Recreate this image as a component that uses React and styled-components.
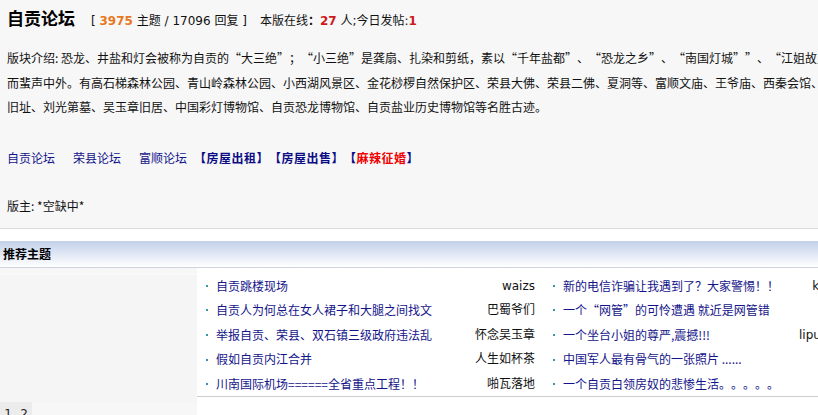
import React from 'react';
import styled, { createGlobalStyle } from 'styled-components';

const GlobalStyle = createGlobalStyle`
    html, body {
        margin: 0;
        padding: 0;
        overflow: hidden;
        background: #f7f7f7;
    }
    body {
        font-family: "Noto Sans CJK SC", sans-serif;
        font-size: 12px;
        color: #000;
        text-spacing-trim: space-all;
    }
`;

const topics = [
    [
        { title: '自贡跳楼现场', author: 'waizs' },
        { title: '新的电信诈骗让我遇到了？大家警惕！！', author: 'kingkong08' },
    ],
    [
        { title: '自贡人为何总在女人裙子和大腿之间找文', author: '巴蜀爷们' },
        { title: '一个“网管”的可怜遭遇 就近是网管错', author: 'ztq' },
    ],
    [
        { title: '举报自贡、荣县、双石镇三级政府违法乱', author: '怀念吴玉章' },
        { title: '一个坐台小姐的尊严,震撼!!!', author: 'lipu20080808' },
    ],
    [
        { title: '假如自贡内江合并', author: '人生如杯茶' },
        { title: '中国军人最有骨气的一张照片 ......', author: 'yy' },
    ],
    [
        { title: '川南国际机场======全省重点工程！！', author: '啪瓦落地' },
        { title: '一个自贡白领房奴的悲惨生活。。。。。', author: 'abc' },
    ],
];

const App = () => {
    return (
        <>
            <GlobalStyle />
            <StyledPage>
                <StyledTop>
                    <StyledTitleRow>
                        <StyledForumName>自贡论坛</StyledForumName>
                        <StyledStats>
                            [ <StyledOrange>3975</StyledOrange> 主题 / 17096 回复 ]
                        </StyledStats>
                        <StyledStats $gap>
                            本版在线<b>：</b><StyledRed>27</StyledRed> 人;今日发帖:<StyledRed>1</StyledRed>
                        </StyledStats>
                    </StyledTitleRow>
                    <StyledIntro>
                        <StyledIntroLine>
                            <StyledLabel>版块介绍: </StyledLabel>恐龙、井盐和灯会被称为自贡的“大三绝”；“小三绝”是龚扇、扎染和剪纸，素以“千年盐都”、“恐龙之乡”、“南国灯城””、“江姐故里”而闻名，
                        </StyledIntroLine>
                        <StyledIntroLine>而蜚声中外。有高石梯森林公园、青山岭森林公园、小西湖风景区、金花桫椤自然保护区、荣县大佛、荣县二佛、夏洞等、富顺文庙、王爷庙、西秦会馆、王爷庙、</StyledIntroLine>
                        <StyledIntroLine>旧址、刘光第墓、吴玉章旧居、中国彩灯博物馆、自贡恐龙博物馆、自贡盐业历史博物馆等名胜古迹。</StyledIntroLine>
                    </StyledIntro>
                    <StyledLinkRow>
                        <StyledForumLink>自贡论坛</StyledForumLink>
                        <StyledForumLink>荣县论坛</StyledForumLink>
                        <StyledForumLink>富顺论坛</StyledForumLink>
                        <StyledBoldLink>【房屋出租】</StyledBoldLink>
                        <StyledBoldLink>【房屋出售】</StyledBoldLink>
                        <StyledBoldLink $red>【<span>麻辣征婚</span>】</StyledBoldLink>
                    </StyledLinkRow>
                    <StyledModerator>版主: *空缺中*</StyledModerator>
                </StyledTop>

                <StyledSection>
                    <StyledSectionHead>推荐主题</StyledSectionHead>
                    <StyledSectionBody>
                        <StyledFocusCell>
                            <StyledFocusBox />
                            <StyledPager>
                                <StyledPageBtn>1</StyledPageBtn>
                                <StyledPageBtn>2</StyledPageBtn>
                            </StyledPager>
                        </StyledFocusCell>
                        <StyledListCell>
                            <StyledList>
                                {topics.map((row, i) => (
                                    <StyledRow key={i}>
                                        {row.map((t, j) => (
                                            <StyledTopic key={j}>
                                                <StyledBullet />
                                                <StyledTopicTitle>{t.title}</StyledTopicTitle>
                                                <StyledAuthor>{t.author}</StyledAuthor>
                                            </StyledTopic>
                                        ))}
                                    </StyledRow>
                                ))}
                            </StyledList>
                        </StyledListCell>
                    </StyledSectionBody>
                </StyledSection>
            </StyledPage>
        </>
    );
};

export default App;

const StyledPage = styled.div`
    width: 900px;
`;
const StyledTop = styled.div`
    padding: 0 7px 10px;
`;
const StyledTitleRow = styled.div`
    display: flex;
    align-items: baseline;
    height: 36px;
    line-height: 36px;
    white-space: nowrap;
`;
const StyledForumName = styled.h1`
    margin: 0 16px 0 0;
    font-size: 17px;
    font-weight: 700;
    color: #000;
`;
const StyledStats = styled.span`
    font-family: "DejaVu Sans", "Noto Sans CJK SC", sans-serif;
    font-size: 12px;
    color: #111;
    margin-left: ${p => (p.$gap ? '13px' : '0')};
`;
const StyledOrange = styled.b`
    color: #e8781e;
`;
const StyledRed = styled.b`
    color: #cc1a1a;
`;
const StyledIntro = styled.div`
    margin-top: 10px;
`;
const StyledIntroLine = styled.div`
    white-space: nowrap;
    line-height: 24.5px;
    color: #111;
    font-feature-settings: "fwid";
`;
const StyledLabel = styled.span`
    font-feature-settings: normal;
`;
const StyledLinkRow = styled.div`
    display: flex;
    margin-top: 26px;
    line-height: 24px;
    white-space: nowrap;
`;
const StyledForumLink = styled.a`
    color: #14148a;
    margin-right: 18px;
    &:nth-child(3) {
        margin-right: 7px;
    }
`;
const StyledBoldLink = styled.a`
    color: #0c0c85;
    font-weight: 700;
    letter-spacing: 0.5px;
    span {
        color: ${p => (p.$red ? '#f00000' : 'inherit')};
    }
`;
const StyledModerator = styled.div`
    margin-top: 24px;
    line-height: 24px;
    color: #111;
`;
const StyledSection = styled.div`
    border-top: 1px solid #dcdcdc;
    padding-top: 12px;
    background: #fff;
`;
const StyledSectionHead = styled.h2`
    margin: 0;
    height: 26px;
    line-height: 26px;
    padding-left: 3px;
    font-size: 12px;
    font-weight: 700;
    color: #000;
    background: linear-gradient(#c3d0ea, #ffffff);
    border-bottom: 1px dashed #d4d4d4;
`;
const StyledSectionBody = styled.div`
    display: flex;
`;
const StyledFocusCell = styled.div`
    width: 197px;
    background: #f7f7f7;
    display: flex;
    flex-direction: column;
`;
const StyledFocusBox = styled.div`
    margin-top: 6px;
    height: 127px;
    border-top: 1px solid #fbfbfb;
    background: #f5f5f5;
`;
const StyledPager = styled.div`
    display: flex;
`;
const StyledPageBtn = styled.span`
    width: 16px;
    height: 24px;
    line-height: 24px;
    text-align: center;
    background: #ececec;
    color: #222;
    font-family: "DejaVu Sans", sans-serif;
    font-size: 12px;
`;
const StyledListCell = styled.div`
    flex: 1;
    background: #fff;
    padding-bottom: 30px;
`;
const StyledList = styled.div`
    padding-top: 6px;
    border-bottom: 1px solid #cfcfcf;
`;
const StyledRow = styled.div`
    display: grid;
    grid-template-columns: 347px 347px;
    height: 24.6px;
    line-height: 24.6px;
`;
const StyledTopic = styled.div`
    display: flex;
    align-items: center;
    padding: 0 9px 0 9px;
    white-space: nowrap;
`;
const StyledBullet = styled.i`
    width: 2px;
    height: 2px;
    background: #3d93ad;
    margin-right: 8px;
    flex-shrink: 0;
`;
const StyledTopicTitle = styled.a`
    flex: 1;
    overflow: hidden;
    color: #14148a;
`;
const StyledAuthor = styled.span`
    font-family: "DejaVu Sans", "Noto Sans CJK SC", sans-serif;
    color: #111;
    text-align: right;
    margin-left: 8px;
`;
